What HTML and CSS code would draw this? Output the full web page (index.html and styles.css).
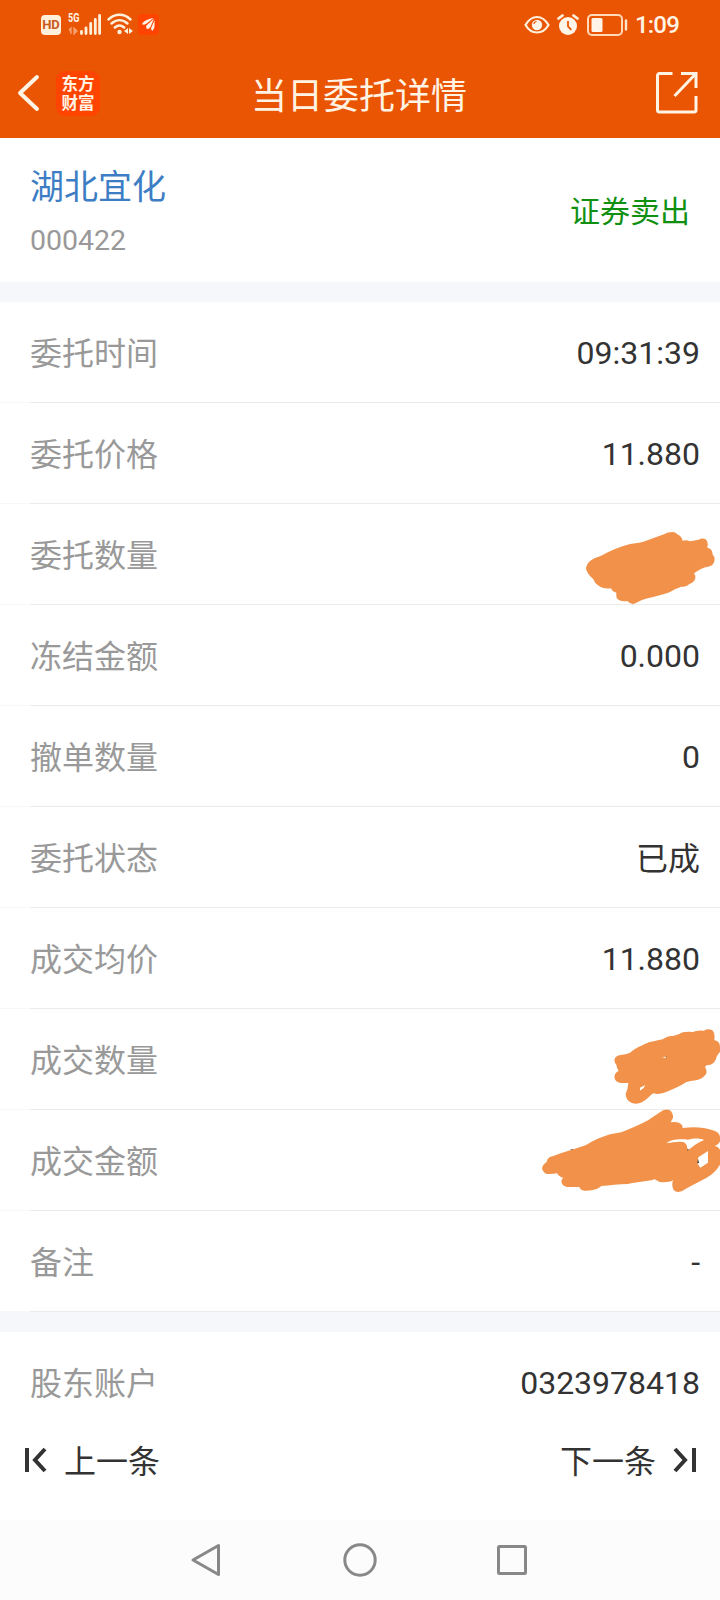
FILE: index.html
```html
<!DOCTYPE html>
<html lang="zh-CN">
<head>
  <meta charset="UTF-8" />
  <meta name="viewport" content="width=device-width, initial-scale=1.0"/>
  <title>当日委托详情</title>
  <link rel="stylesheet" href="styles.css">
</head>
<body>
  <header class="header">
    <div class="status">
      <div class="status-left">
        <span class="hd">HD</span>
        <div class="signal">
          <span class="net">5G</span>
          <svg width="34" height="22" viewBox="0 0 34 22">
            <path d="M3 21V15l-2 2M6 15v6l3-3z" stroke="#f8a070" stroke-width="1.3" fill="#f8a070"/>
            <path d="M13.5 20.500v-2M18 20.500v-5.500M22.700 20.500V10.500M27.300 20.500V6.500M31.600 20.500V2.500" stroke="#fff0dc" stroke-width="2.8" stroke-linecap="round"/>
          </svg>
        </div>
        <svg class="wifi" width="26" height="22" viewBox="0 0 26 22">
          <g fill="none" stroke="#fff0dc" stroke-width="2.500" stroke-linecap="round">
            <path d="M1.500 6.500C8 .3 17 .3 23.500 6.500"/>
            <path d="M4.500 10.500c5-4.500 11-4.500 16 0"/>
            <path d="M7.800 14.500c3-2.600 6.400-2.600 9.400 0"/>
          </g>
          <circle cx="12.500" cy="19" r="2.200" fill="#fff0dc"/>
          <path d="M21 15v6l-4-3zM22 15v6l4-3z" fill="#fff0dc"/>
        </svg>
        <svg class="app-mark" width="21" height="21" viewBox="0 0 21 21">
          <rect width="21" height="21" rx="4" fill="#ff4400"/>
          <path d="M4 10C7 5.500 11 5 15.500 4L8 10c-2 1-3 1-4 0zM8 12l8-7.500L12.500 13c-1.500 2-3 2.500-4 1.500zM13 14.500L16.500 6v6c0 2-1 4-2.500 5z" fill="#fff4e8"/>
        </svg>
      </div>
      <div class="status-right">
        <svg class="eye" width="26" height="22" viewBox="0 0 26 22">
          <path d="M1.500 11C5 5 9 3 13 3s8 2 11.500 8C21 17 17 18.500 13 18.500S5 17 1.500 11z" fill="none" stroke="#fff0dc" stroke-width="2.200"/>
          <circle cx="13" cy="11" r="5.200" fill="#fff4e8"/>
          <path d="M10 10c0-1.500 1-2.500 2.600-2.500" fill="none" stroke="#ea5504" stroke-width="1.200"/>
        </svg>
        <svg class="alarm" width="22" height="22" viewBox="0 0 22 22">
          <circle cx="11" cy="12" r="9" fill="#fff4e8"/>
          <path d="M1.500 4.500l4-3M20.500 4.500l-4-3" stroke="#fff0dc" stroke-width="2.800" stroke-linecap="round"/>
          <path d="M11 7v5.500l3.300 3.300" fill="none" stroke="#ea5504" stroke-width="1.800"/>
        </svg>
        <svg class="battery" width="42" height="22" viewBox="0 0 42 22">
          <rect x="1" y="1" width="34" height="20" rx="4" fill="none" stroke="#ffd9b8" stroke-width="2"/>
          <rect x="4.500" y="4" width="11" height="14" rx="1.500" fill="#fff4e8"/>
          <path d="M39 6.500v9" stroke="#ffe4cc" stroke-width="2.400" stroke-linecap="round"/>
        </svg>
        <span class="clock">1:09</span>
      </div>
    </div>
    <div class="titlebar">
      <div class="titlebar-left">
        <svg class="back" width="24" height="38" viewBox="0 0 24 38">
          <path d="M20 3L3 19l17 16" fill="none" stroke="#fff4e4" stroke-width="4" stroke-linecap="round" stroke-linejoin="round"/>
        </svg>
        <div class="logo"><span>东方</span><span>财富</span></div>
      </div>
      <h1>当日委托详情</h1>
      <svg class="share" width="44" height="44" viewBox="0 0 44 44">
        <path d="M17.500 2.500H4.500a2 2 0 0 0-2 2V39a2 2 0 0 0 2 2H39a2 2 0 0 0 2-2V25M26 2.500h15V17M41 2.500L19.500 25" fill="none" stroke="#fff4e4" stroke-width="3"/>
      </svg>
    </div>
  </header>

  <section class="stock">
    <div>
      <div class="stock-name">湖北宜化</div>
      <div class="stock-code">000422</div>
    </div>
    <div class="side">证券卖出</div>
  </section>

  <section class="list">
    <div class="row"><span class="label">委托时间</span><span class="value">09:31:39</span></div>
    <div class="row"><span class="label">委托价格</span><span class="value">11.880</span></div>
    <div class="row">
      <span class="label">委托数量</span>
      <svg class="scribble scribble-qty" width="150" height="110" viewBox="0 0 450 330">
        <path d="M48 174C50 164 56 154 68 148C74 142 84 142 92 138C120 122 150 110 180 102C196 99 208 99 220 95L284 72Q292 66 302 67Q314 64 321 72Q335 79 338 92Q348 88 360 94L386 89Q396 82 407 88Q416 96 412 113Q428 116 428 134Q436 140 433 154Q430 168 414 170C400 171 386 180 372 190Q380 200 373 212Q366 220 358 222Q350 232 334 230Q320 234 300 246C276 256 240 262 216 270Q204 276 196 280Q184 286 172 273Q150 276 140 264Q138 254 139 248Q128 246 123 235Q100 238 84 226Q74 220 70 208Q48 188 48 174z"/>
      </svg>
    </div>
    <div class="row"><span class="label">冻结金额</span><span class="value">0.000</span></div>
    <div class="row"><span class="label">撤单数量</span><span class="value">0</span></div>
    <div class="row"><span class="label">委托状态</span><span class="value value-cn">已成</span></div>
    <div class="row"><span class="label">成交均价</span><span class="value">11.880</span></div>
    <div class="row">
      <span class="label">成交数量</span>
      <svg class="scribble scribble-deal" width="200" height="100" viewBox="0 0 600 300">
        <path fill-rule="evenodd" d="M283 150Q286 136 302 135Q318 134 330 128C350 112 372 104 386 97L428 88Q440 78 462 77Q476 74 488 67Q504 64 518 66Q530 60 552 62Q564 54 577 61Q586 70 583 90Q600 94 600 110V125Q594 132 590 140Q586 164 560 166L555 170Q564 188 555 196Q546 208 528 211Q510 212 498 217C480 230 462 236 444 244Q420 256 400 250C388 258 382 268 366 277Q350 284 336 279Q318 272 317 252Q324 236 325 219H302Q284 216 283 200Q286 186 296 183Q290 172 289 164Q284 160 283 150zM360 233L376 225L371 234L360 242zM427 143L438 139V143z"/>
        <path d="M437 139h3v3h-3z" fill="#8a5a30"/>
      </svg>
    </div>
    <div class="row">
      <span class="label">成交金额</span>
      <svg class="scribble scribble-amount" width="200" height="100" viewBox="0 300 600 300">
        <path d="M150 420l8-3 4 5zM500 418h7l-5 8zM525 450l8-8 4 17-10 2z" fill="#333"/>
        <path fill-rule="evenodd" d="M66 474Q70 462 80 455Q84 440 98 439L124 429C150 420 176 414 198 405C222 390 248 380 270 373L304 367C334 356 362 342 384 331L420 307Q434 294 450 301Q460 310 459 324L452 337Q474 334 483 342Q489 348 488 354C516 350 552 350 578 361Q598 366 600 380V394Q598 402 584 408Q596 410 600 420V464Q584 490 560 503L500 535Q486 546 473 546Q456 542 457 524Q456 516 460 511Q450 517 438 516Q420 520 404 508C378 516 348 516 324 522C298 522 268 526 244 528C232 540 212 542 194 542Q180 540 178 531H140Q124 526 124 512Q126 506 130 503Q118 502 111 490Q96 493 80 492Q68 486 66 474zM440 400C450 390 474 386 504 389C520 384 542 384 552 390C532 398 518 410 502 422Q504 402 490 396Q466 394 440 400zM564 423V458L541 473L532 460L535 442z"/>
      </svg>
    </div>
    <div class="row"><span class="label">备注</span><span class="value">-</span></div>
  </section>

  <section class="list account">
    <div class="row"><span class="label">股东账户</span><span class="value">0323978418</span></div>
  </section>

  <div class="pager">
    <div class="pager-item">
      <svg width="24" height="26" viewBox="0 0 24 26">
        <path d="M3 1v24M21 2L11 13l10 11" fill="none" stroke="#333" stroke-width="4"/>
      </svg>
      <span>上一条</span>
    </div>
    <div class="pager-item">
      <span>下一条</span>
      <svg width="24" height="26" viewBox="0 0 24 26">
        <path d="M22 1v24M3 2l10 11L3 24" fill="none" stroke="#333" stroke-width="4"/>
      </svg>
    </div>
  </div>

  <nav class="navbar">
    <svg width="36" height="36" viewBox="0 0 36 36"><path d="M28.500 3.500V32.500L3 18z"/></svg>
    <svg width="36" height="36" viewBox="0 0 36 36"><circle cx="18" cy="18" r="15.200"/></svg>
    <svg width="36" height="36" viewBox="0 0 36 36"><rect x="4.500" y="4.500" width="27" height="27" rx="1"/></svg>
  </nav>
</body>
</html>
```

FILE: styles.css
```css
* {
  box-sizing: border-box;
}

body {
  margin: 0;
  width: 720px;
  height: 1600px;
  display: flex;
  flex-direction: column;
  background: #fff;
  color: #333;
  font-family: Roboto, "Noto Sans CJK SC", sans-serif;
  overflow: hidden;
}

svg {
  display: block;
  flex: none;
}

/* 顶部 */
.header {
  height: 138px;
  background: #ea5504;
  color: #fff4e4;
}

.status {
  height: 48px;
  padding: 0 41px;
  display: flex;
  justify-content: space-between;
}

.status-left,
.status-right {
  display: flex;
  align-items: center;
}

.hd {
  width: 20px;
  height: 20px;
  margin-top: 2px;
  border-radius: 4px;
  background: #fff0dc;
  color: #c85a20;
  font-size: 13px;
  font-weight: 700;
  line-height: 20px;
  text-align: center;
}

.signal {
  position: relative;
  margin-left: 7px;
}

.net {
  position: absolute;
  left: 0;
  top: 0;
  font-size: 12px;
  font-weight: 700;
  line-height: 11px;
  transform: scaleX(0.75);
  transform-origin: left;
}

.wifi {
  margin-left: 5px;
}

.app-mark {
  margin-left: 5px;
}

.alarm {
  margin-left: 7px;
}

.battery {
  margin-left: 8px;
}

.status-right svg {
  margin-top: 1px;
}

.clock {
  width: 44px;
  margin-left: 6px;
  font-size: 24px;
  font-weight: 500;
  letter-spacing: -0.8px;
  line-height: 48px;
  padding-top: 2px;
  white-space: nowrap;
}

.titlebar {
  height: 90px;
  padding: 0 21px 0 17px;
  display: grid;
  grid-template-columns: 1fr auto 1fr;
  align-items: center;
}

.titlebar-left {
  display: flex;
  align-items: center;
}

.logo {
  width: 44px;
  height: 45px;
  margin-left: 15px;
  padding-top: 3px;
  border-radius: 9px;
  background: #ff4400;
  font-family: "Noto Sans CJK SC", sans-serif;
  font-size: 16.5px;
  font-weight: 700;
  line-height: 19px;
  text-align: center;
}

.logo span {
  display: block;
  height: 19px;
}

h1 {
  margin: 7px 0 0 2px;
  font-size: 36px;
  font-weight: 400;
  line-height: 48px;
}

.share {
  justify-self: end;
}

/* 股票 */
.stock {
  height: 144px;
  padding: 0 30px;
  display: flex;
  align-items: center;
  justify-content: space-between;
}

.stock-name {
  color: #3d7dc4;
  font-size: 34px;
  line-height: 50px;
}

.stock-code {
  margin-top: 11px;
  color: #999;
  font-size: 28.5px;
  line-height: 36px;
}

.side {
  margin-top: 3px;
  color: #109010;
  font-size: 30px;
  line-height: 44px;
}

/* 明细 */
.list {
  border-top: 20px solid #f6f7fa;
}

.row {
  position: relative;
  height: 101px;
  padding: 0 20px 0 30px;
  display: flex;
  align-items: center;
  justify-content: space-between;
  font-size: 32px;
  background: linear-gradient(to right, #f8f8f8 30px, #ebebeb 30px) 0 100% / 100% 1px no-repeat;
}

.label,
.value-cn {
  padding-bottom: 4px;
}

.label {
  color: #999;
}

.scribble {
  position: absolute;
  right: 0;
  z-index: 1;
  overflow: visible;
  fill: #f2924a;
}

.scribble-qty {
  top: 6px;
}

.scribble-deal {
  top: 1px;
}

.scribble-amount {
  top: 0;
}

.account .row {
  background: none;
}

/* 上一条 / 下一条 */
.pager {
  height: 87px;
  padding: 0 24px 0 24px;
  display: flex;
  justify-content: space-between;
  font-size: 32px;
}

.pager-item {
  height: 54px;
  display: flex;
  align-items: center;
  gap: 16px;
}

.pager-item span {
  padding-bottom: 3px;
}

.navbar {
  height: 80px;
  padding: 0 190px;
  display: flex;
  align-items: center;
  justify-content: space-between;
  background: #fcfcfc;
}

.navbar svg {
  fill: none;
  stroke: #888;
  stroke-width: 3;
  stroke-linejoin: round;
}
```
